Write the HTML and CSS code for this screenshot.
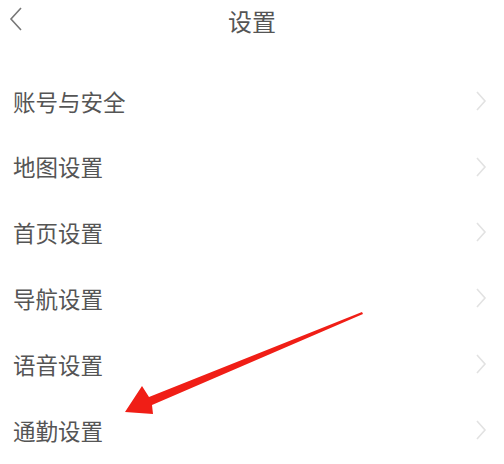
FILE: index.html
```html
<!DOCTYPE html>
<html lang="zh-CN">
<head>
<meta charset="utf-8">
<title>设置</title>
<link rel="stylesheet" href="styles.css">
</head>
<body>
<div class="page">
  <header class="header">
    <svg class="back" width="14" height="24" viewBox="0 0 14 24"><polyline points="12,1 2,12 12,23" fill="none" stroke="#777" stroke-width="1.6"/></svg>
    <h1 class="title">设置</h1>
  </header>
  <ul class="list">
    <li class="row"><span class="label">账号与安全</span><svg class="chev" width="12" height="20" viewBox="0 0 12 20"><polyline points="2,1 10,10 2,19" fill="none" stroke="#e2e2e2" stroke-width="1.6"/></svg></li>
    <li class="row"><span class="label">地图设置</span><svg class="chev" width="12" height="20" viewBox="0 0 12 20"><polyline points="2,1 10,10 2,19" fill="none" stroke="#e2e2e2" stroke-width="1.6"/></svg></li>
    <li class="row"><span class="label">首页设置</span><svg class="chev" width="12" height="20" viewBox="0 0 12 20"><polyline points="2,1 10,10 2,19" fill="none" stroke="#e2e2e2" stroke-width="1.6"/></svg></li>
    <li class="row"><span class="label">导航设置</span><svg class="chev" width="12" height="20" viewBox="0 0 12 20"><polyline points="2,1 10,10 2,19" fill="none" stroke="#e2e2e2" stroke-width="1.6"/></svg></li>
    <li class="row"><span class="label">语音设置</span><svg class="chev" width="12" height="20" viewBox="0 0 12 20"><polyline points="2,1 10,10 2,19" fill="none" stroke="#e2e2e2" stroke-width="1.6"/></svg></li>
    <li class="row"><span class="label">通勤设置</span><svg class="chev" width="12" height="20" viewBox="0 0 12 20"><polyline points="2,1 10,10 2,19" fill="none" stroke="#e2e2e2" stroke-width="1.6"/></svg></li>
  </ul>
  <svg class="arrow" width="504" height="464" viewBox="0 0 504 464"><polygon points="362,312 149,397 142,386 125,412 153,414 152,405 363,314" fill="#f01e16"/></svg>
</div>
</body>
</html>
```

FILE: styles.css
```css
html, body {
  margin: 0;
  padding: 0;
  background: #ffffff;
}
.page {
  position: relative;
  width: 504px;
  height: 464px;
  overflow: hidden;
  font-family: "Noto Sans CJK SC", "Noto Sans", sans-serif;
  color: #555555;
}
.header {
  height: 42px;
  display: flex;
  align-items: center;
  justify-content: center;
  position: relative;
}
.back {
  position: absolute;
  left: 9px;
  top: 7px;
}
.title {
  margin: 0;
  font-size: 24px;
  font-weight: 400;
  line-height: 42px;
  color: #555555;
}
.list {
  list-style: none;
  margin: 26px 0 0 0;
  padding: 0 17px 0 13px;
}
.row {
  height: 65.8px;
  display: flex;
  align-items: center;
  justify-content: space-between;
}
.label {
  font-size: 22.5px;
  line-height: 1;
  color: #555555;
}
.chev {
  display: block;
}
.arrow {
  position: absolute;
  left: 0;
  top: 0;
  pointer-events: none;
}
```
